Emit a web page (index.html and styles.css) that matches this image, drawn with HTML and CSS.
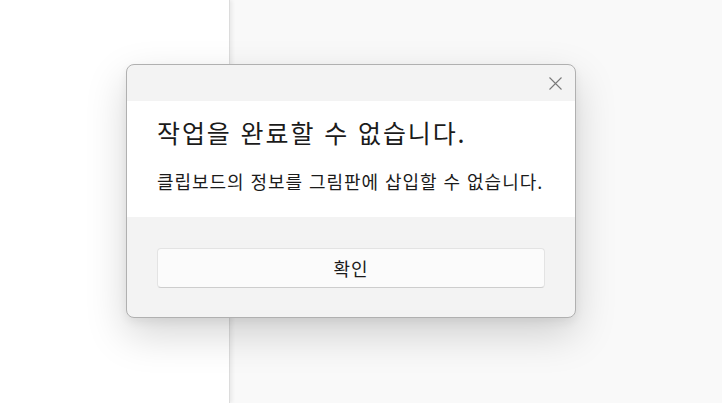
FILE: index.html
```html
<!DOCTYPE html>
<html lang="ko">
  <head>
    <meta charset="utf-8">
    <title>그림판</title>
    <link rel="stylesheet" href="styles.css">
  </head>
<body>
  <div class="app">
    <div class="side"></div>
    <div class="canvas"></div>
  </div>

  <div class="dialog">
    <div class="dlg_head">
      <button class="close" aria-label="닫기">
        <svg width="13" height="13" viewBox="0 0 13 13"><path d="M0.5 0.5 L12.5 12.5 M12.5 0.5 L0.5 12.5" stroke="#7a7a7a" stroke-width="1.1" fill="none"/></svg>
      </button>
    </div>
    <div class="dlg_body">
      <h1>작업을 완료할 수 없습니다.</h1>
      <p>클립보드의 정보를 그림판에 삽입할 수 없습니다.</p>
    </div>
    <div class="dlg_foot">
      <button class="ok">확인</button>
    </div>
  </div>
</body>
</html>
```

FILE: styles.css
```css
* { margin: 0; padding: 0; box-sizing: border-box; }
html, body { height: 100%; }
body { font-family: "Noto Sans CJK KR", "Noto Sans", sans-serif; color: #1b1b1b; background: #f9f9f9; overflow: hidden; }

.app { display: flex; height: 100%; }
.side { width: 230px; background: #fff; border-right: 1px solid #dcdcdc; box-shadow: 2px 0 4px rgba(0,0,0,0.07); position: relative; z-index: 1; }
.canvas { flex: 1; background: #f9f9f9; }

.dialog { position: absolute; z-index: 2; left: 126px; top: 64px; width: 450px; height: 254px; display: flex; flex-direction: column; background: #f3f3f3; border: 1px solid #b0b0b0; border-radius: 8px; overflow: hidden; box-shadow: 0 16px 40px rgba(0,0,0,0.17), 0 4px 10px rgba(0,0,0,0.06); }

.dlg_head { height: 36px; display: flex; justify-content: flex-end; align-items: center; padding-right: 8px; }
.close { width: 24px; height: 24px; border: 0; background: none; display: flex; align-items: center; justify-content: center; }

.dlg_body { background: #fff; height: 116px; padding: 14px 30px 0 30px; }
.dlg_body h1 { font-size: 25px; font-weight: 400; line-height: 34px; letter-spacing: 1.9px; }
.dlg_body p { font-size: 18px; line-height: 26px; margin-top: 19px; letter-spacing: 0.95px; }

.dlg_foot { flex: 1; padding: 31px 30px 0 30px; }
.ok { width: 100%; height: 40px; background: #fbfbfb; border: 1px solid #e3e3e3; border-bottom-color: #cdcdcd; border-radius: 4px; font-family: inherit; font-size: 18px; letter-spacing: 1px; color: #1b1b1b; }
```
